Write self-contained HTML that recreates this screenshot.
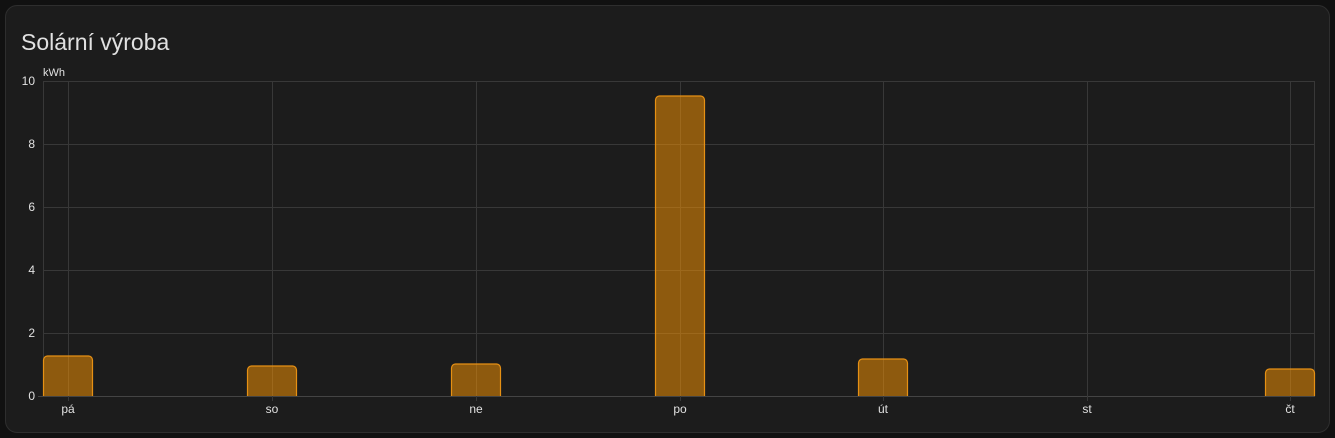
<!DOCTYPE html><html><head><meta charset="utf-8"><style>
html,body{margin:0;background:#111;width:1335px;height:438px;overflow:hidden;font-family:"Liberation Sans",sans-serif}
.card{position:absolute;left:5px;top:5px;width:1323px;height:426px;background:#1c1c1c;border:1px solid #2e2e2e;border-radius:12px}
.t{position:absolute;left:21px;top:29px;font-size:23px;color:#e1e1e1}
svg{position:absolute;left:0;top:0}
</style></head><body>
<div class="card"></div>
<div class="t">Solární výroba</div>
<svg width="1335" height="438" font-family="Liberation Sans, sans-serif" font-size="12" fill="#e1e1e1">
<g stroke="#383838" stroke-width="1">
<line x1="43" y1="81.5" x2="1315" y2="81.5"/><line x1="43" y1="144.5" x2="1315" y2="144.5"/>
<line x1="43" y1="207.5" x2="1315" y2="207.5"/><line x1="43" y1="270.5" x2="1315" y2="270.5"/>
<line x1="43" y1="333.5" x2="1315" y2="333.5"/><line x1="38" y1="396.5" x2="1315" y2="396.5" stroke="#444"/>
<line x1="43.5" y1="81" x2="43.5" y2="396"/><line x1="68.5" y1="81" x2="68.5" y2="401"/>
<line x1="272.5" y1="81" x2="272.5" y2="401"/><line x1="476.5" y1="81" x2="476.5" y2="401"/>
<line x1="680.5" y1="81" x2="680.5" y2="401"/><line x1="883.5" y1="81" x2="883.5" y2="401"/>
<line x1="1087.5" y1="81" x2="1087.5" y2="401"/><line x1="1290.5" y1="81" x2="1290.5" y2="401"/>
<line x1="1314.5" y1="81" x2="1314.5" y2="396"/>
</g>
<g fill="rgba(255,152,0,0.5)" stroke="#e69014" stroke-width="1.2">
<path d="M43.5 396V360a4 4 0 0 1 4-4h41a4 4 0 0 1 4 4V396"/>
<path d="M247.5 396V370a4 4 0 0 1 4-4h41a4 4 0 0 1 4 4V396"/>
<path d="M451.5 396V368a4 4 0 0 1 4-4h41a4 4 0 0 1 4 4V396"/>
<path d="M655.5 396V100a4 4 0 0 1 4-4h41a4 4 0 0 1 4 4V396"/>
<path d="M858.5 396V363a4 4 0 0 1 4-4h41a4 4 0 0 1 4 4V396"/>
<path d="M1265.5 396V373a4 4 0 0 1 4-4h41a4 4 0 0 1 4 4V396"/>
</g>
<g text-anchor="end"><text x="35" y="85">10</text><text x="35" y="148">8</text><text x="35" y="211">6</text><text x="35" y="274">4</text><text x="35" y="337">2</text><text x="35" y="400">0</text></g>
<text x="43" y="76" font-size="11">kWh</text>
<g text-anchor="middle"><text x="68" y="413">pá</text><text x="272" y="413">so</text><text x="476" y="413">ne</text><text x="680" y="413">po</text><text x="883" y="413">út</text><text x="1087" y="413">st</text><text x="1290" y="413">čt</text></g>
</svg>
</body></html>
